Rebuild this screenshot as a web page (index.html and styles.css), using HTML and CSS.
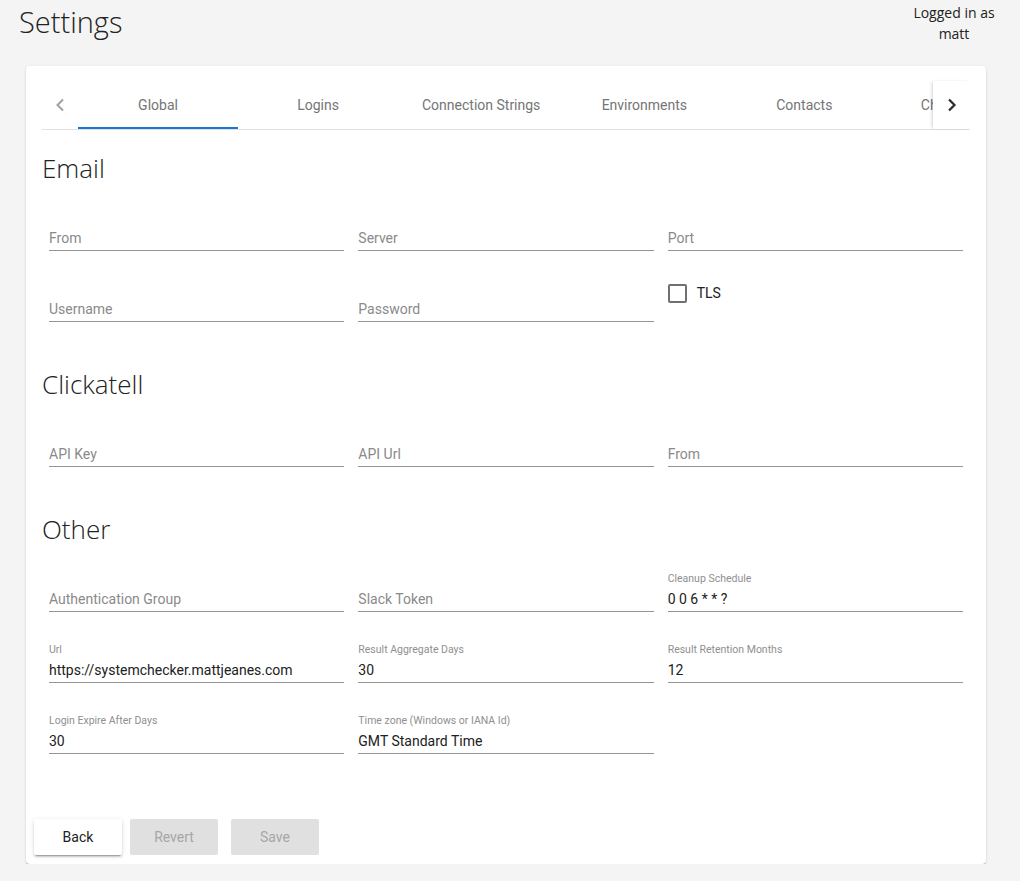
FILE: index.html
```html
<!DOCTYPE html>
<html lang="en">
<head>
<meta charset="utf-8">
<title>Settings</title>
<link rel="stylesheet" href="styles.css">
</head>
<body>
<header class="page-header">
  <h1 class="page-title">Settings</h1>
  <div class="user-info">Logged in as matt</div>
</header>
<main class="card">
  <nav class="tab-header">
    <div class="paginator paginator-left">
      <svg width="10" height="14" viewBox="0 0 10 14"><path d="M8 1.5 L2.5 7 L8 12.5" fill="none" stroke="#a0a0a0" stroke-width="2"/></svg>
    </div>
    <div class="tab-list-wrap">
      <div class="tab-list">
        <div class="tab active">Global</div>
        <div class="tab">Logins</div>
        <div class="tab">Connection Strings</div>
        <div class="tab">Environments</div>
        <div class="tab">Contacts</div>
        <div class="tab">Check Groups</div>
      </div>
    </div>
    <div class="paginator paginator-right">
      <svg width="10" height="14" viewBox="0 0 10 14"><path d="M2 1.5 L7.5 7 L2 12.5" fill="none" stroke="#2a2a2a" stroke-width="2.2"/></svg>
    </div>
  </nav>

  <section class="section first">
    <h2 class="section-title">Email</h2>
    <div class="grid">
      <div class="field"><div class="field-label"></div><div class="field-value placeholder">From</div></div>
      <div class="field"><div class="field-label"></div><div class="field-value placeholder">Server</div></div>
      <div class="field"><div class="field-label"></div><div class="field-value placeholder">Port</div></div>
      <div class="field"><div class="field-label"></div><div class="field-value placeholder">Username</div></div>
      <div class="field"><div class="field-label"></div><div class="field-value placeholder">Password</div></div>
      <div class="checkbox-cell"><span class="checkbox"></span><span class="checkbox-label">TLS</span></div>
    </div>
  </section>

  <section class="section">
    <h2 class="section-title">Clickatell</h2>
    <div class="grid">
      <div class="field"><div class="field-label"></div><div class="field-value placeholder">API Key</div></div>
      <div class="field"><div class="field-label"></div><div class="field-value placeholder">API Url</div></div>
      <div class="field"><div class="field-label"></div><div class="field-value placeholder">From</div></div>
    </div>
  </section>

  <section class="section">
    <h2 class="section-title">Other</h2>
    <div class="grid">
      <div class="field"><div class="field-label"></div><div class="field-value placeholder">Authentication Group</div></div>
      <div class="field"><div class="field-label"></div><div class="field-value placeholder">Slack Token</div></div>
      <div class="field"><div class="field-label">Cleanup Schedule</div><div class="field-value">0 0 6 * * ?</div></div>
      <div class="field"><div class="field-label">Url</div><div class="field-value">https://systemchecker.mattjeanes.com</div></div>
      <div class="field"><div class="field-label">Result Aggregate Days</div><div class="field-value">30</div></div>
      <div class="field"><div class="field-label">Result Retention Months</div><div class="field-value">12</div></div>
      <div class="field"><div class="field-label">Login Expire After Days</div><div class="field-value">30</div></div>
      <div class="field"><div class="field-label">Time zone (Windows or IANA Id)</div><div class="field-value">GMT Standard Time</div></div>
    </div>
  </section>

  <div class="actions">
    <button class="btn btn-raised">Back</button>
    <button class="btn btn-disabled">Revert</button>
    <button class="btn btn-disabled btn-save">Save</button>
  </div>
</main>
</body>
</html>
```

FILE: styles.css
```css
* { box-sizing: border-box; }

body {
  margin: 0;
  background: #f4f4f4;
  font-family: Roboto, "Liberation Sans", sans-serif;
  color: #212121;
}

.page-header {
  display: flex;
  justify-content: space-between;
  align-items: flex-start;
  height: 66px;
}

.page-title {
  margin: 0;
  padding: 2px 0 0 19px;
  font-family: "Open Sans", sans-serif;
  font-weight: 300;
  font-size: 29px;
  line-height: 40px;
  color: #222;
}

.user-info {
  width: 100px;
  margin: 2px 16px 0 0;
  text-align: center;
  font-family: "Open Sans", sans-serif;
  font-size: 14px;
  line-height: 21px;
  color: #222;
}

.card {
  margin: 0 34px 0 26px;
  background: #fff;
  border-radius: 4px;
  padding: 15px 16px 9px;
  box-shadow: 0 2px 1px -1px rgba(0,0,0,.2), 0 1px 1px 0 rgba(0,0,0,.14), 0 1px 3px 0 rgba(0,0,0,.12);
}

.tab-header {
  display: flex;
  height: 49px;
  border-bottom: 1px solid #e0e0e0;
}

.paginator {
  flex: none;
  display: flex;
  align-items: center;
  justify-content: center;
  height: 48px;
}

.paginator-left { width: 36px; }
.paginator-right {
  width: 37px;
  box-shadow: -2px 0 3px -1px rgba(0,0,0,.18);
  position: relative;
  z-index: 1;
  background: #fff;
}

.tab-list-wrap {
  flex: 1;
  overflow: hidden;
}

.tab-list {
  display: flex;
  height: 48px;
}

.tab {
  flex: none;
  min-width: 160px;
  padding: 0 24px;
  height: 48px;
  display: flex;
  align-items: center;
  justify-content: center;
  font-size: 14px;
  color: #757575;
  white-space: nowrap;
}

.tab.active {
  border-bottom: 2px solid #1976d2;
  padding-top: 2px;
}

.section-title {
  margin: 0;
  font-family: "Open Sans", sans-serif;
  font-weight: 300;
  font-size: 26px;
  line-height: 36px;
  color: #222;
}

.section { margin-top: 38px; }
.section.first { margin-top: 20px; }

.grid {
  display: grid;
  grid-template-columns: repeat(3, 1fr);
}

.field {
  height: 71px;
  padding: 25px 7px 0;
}

.field-label {
  height: 14px;
  font-size: 10.5px;
  line-height: 14px;
  color: #8f8f8f;
}

.field-value {
  height: 26px;
  padding-top: 3px;
  font-size: 14px;
  line-height: 20px;
  color: #212121;
  border-bottom: 1px solid #949494;
  white-space: nowrap;
}

.field-value.placeholder { color: #8a8a8a; }

.checkbox-cell {
  display: flex;
  align-items: flex-start;
  padding: 27px 7px 0;
  height: 71px;
}

.checkbox {
  width: 19px;
  height: 19px;
  border: 2px solid #707070;
  border-radius: 2px;
}

.checkbox-label {
  margin-left: 10px;
  font-size: 14px;
  line-height: 19px;
  color: #212121;
}

.actions {
  display: flex;
  margin: 59px -8px 0;
}

.btn {
  width: 88px;
  height: 36px;
  border: none;
  border-radius: 2px;
  font-family: Roboto, "Liberation Sans", sans-serif;
  font-size: 14px;
  padding: 0;
  margin-right: 8px;
}

.btn-raised {
  background: #fff;
  color: #212121;
  box-shadow: 0 3px 1px -2px rgba(0,0,0,.2), 0 2px 2px 0 rgba(0,0,0,.14), 0 1px 5px 0 rgba(0,0,0,.12);
}

.btn-disabled {
  background: #e0e0e0;
  color: #a6a6a6;
}

.btn-save { margin-left: 5px; }
```
